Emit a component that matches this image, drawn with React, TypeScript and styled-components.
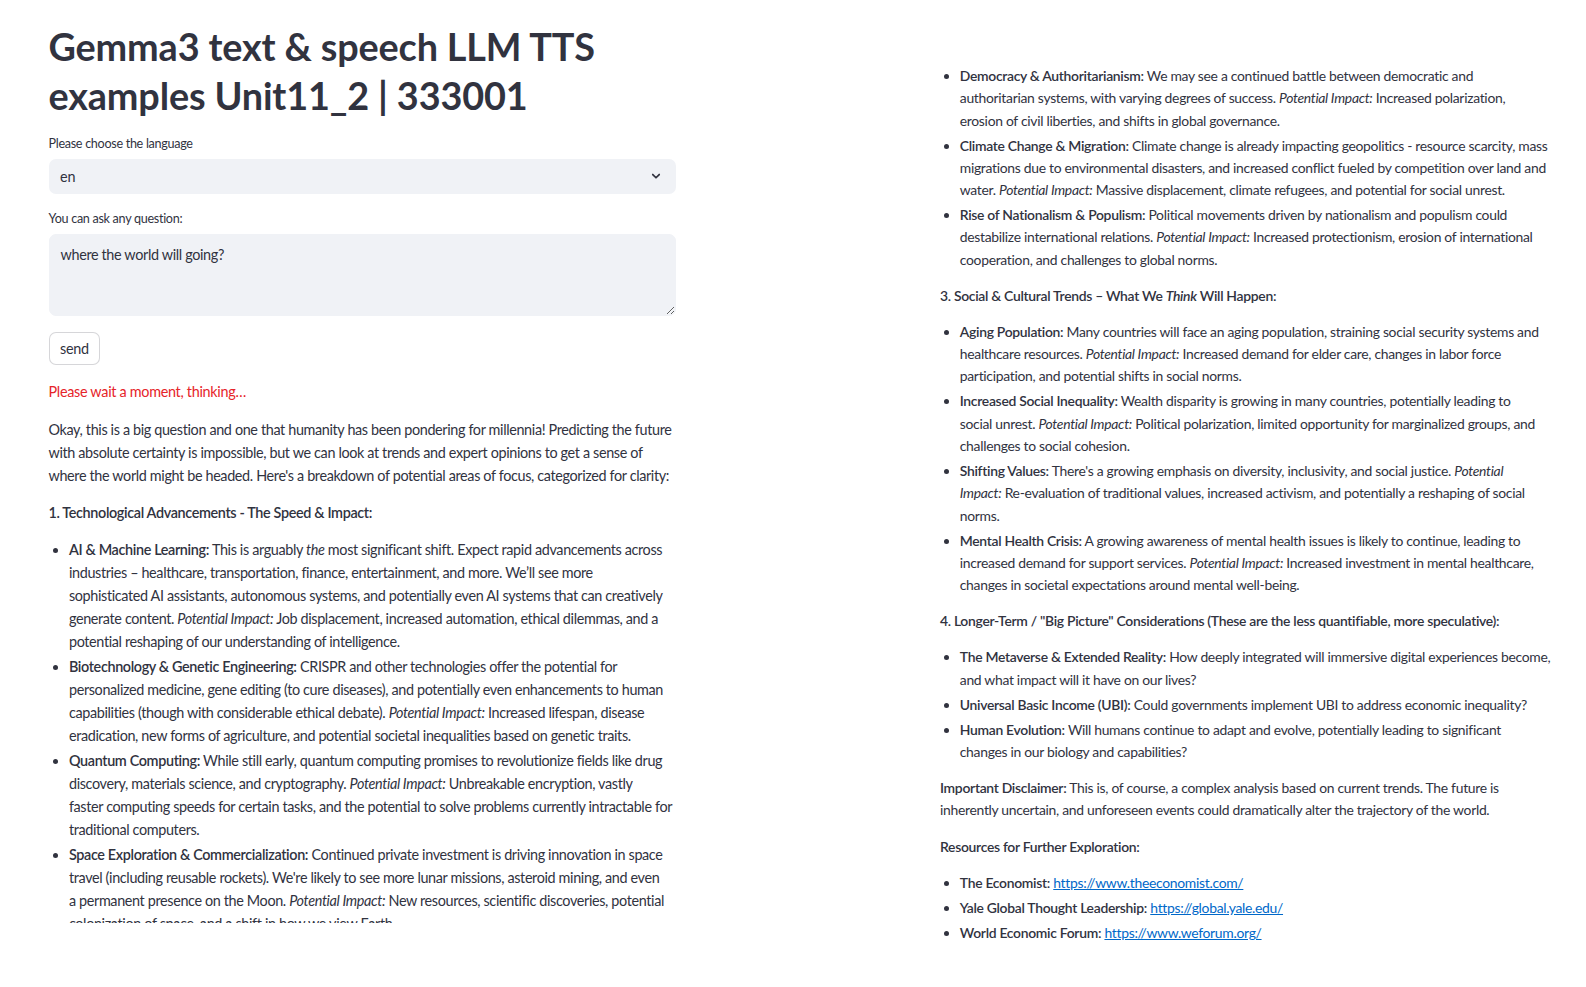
import React from "react";
import styled, { createGlobalStyle } from "styled-components";

const Global = createGlobalStyle`
  html, body { margin: 0; padding: 0; background: #ffffff; }
  body {
    font-family: Lato, "Noto Sans", sans-serif;
    color: #31333f;
    -webkit-font-smoothing: antialiased;
  }
  #root { width: 1586px; height: 987px; overflow: hidden; }
`;

const Page = styled.div`
  display: flex;
  align-items: flex-start;
  width: 1586px;
  height: 987px;
`;

const LeftPane = styled.main`
  box-sizing: border-box;
  flex: 0 0 940px;
  height: 923px;
  padding-left: 48.5px;
  overflow: hidden;
`;

const Column = styled.div`
  width: 627px;
  display: flex;
  flex-direction: column;
`;

const Title = styled.h1`
  margin: 0;
  padding-top: 23px;
  font-size: 37.8px;
  line-height: 48.5px;
  font-weight: 700;
  color: #31333f;
  letter-spacing: -0.15px;
`;

const Field = styled.div<{ $top: number }>`
  display: flex;
  flex-direction: column;
  gap: 6px;
  margin-top: ${(p) => p.$top}px;
`;

const FieldLabel = styled.label`
  font-size: 12.6px;
  line-height: 18px;
  color: #31333f;
  letter-spacing: -0.3px;
`;

const SelectBox = styled.div`
  box-sizing: border-box;
  height: 34.5px;
  display: flex;
  align-items: center;
  justify-content: space-between;
  padding: 0 13px 0 11.5px;
  background: #f0f2f6;
  border-radius: 7px;
  font-size: 14.4px;
  color: #31333f;
`;

const Chevron = styled.svg`
  width: 14px;
  height: 14px;
  color: #31333f;
`;

const TextArea = styled.textarea`
  box-sizing: border-box;
  display: block;
  width: 100%;
  height: 82px;
  margin: 0;
  padding: 8px 11px;
  border: 1px solid #f0f2f6;
  border-radius: 7px;
  background: #f0f2f6;
  font-family: Lato, "Noto Sans", sans-serif;
  font-size: 14.4px;
  line-height: 23px;
  letter-spacing: -0.35px;
  color: #31333f;
  resize: vertical;
  outline: none;
`;

const SendButton = styled.button`
  align-self: flex-start;
  box-sizing: border-box;
  height: 33px;
  margin-top: 16.5px;
  padding: 0 10.5px;
  background: #ffffff;
  border: 1px solid rgba(49, 51, 63, 0.2);
  border-radius: 7px;
  font-family: Lato, "Noto Sans", sans-serif;
  font-size: 14.4px;
  color: #31333f;
  letter-spacing: -0.3px;
`;

const Markdown = styled.div<{ $size: number; $lh: number; $top: number; $ls: number; $gap: number }>`
  margin-top: ${(p) => p.$top}px;
  font-size: ${(p) => p.$size}px;
  line-height: ${(p) => p.$lh}px;
  letter-spacing: ${(p) => p.$ls}px;
  white-space: nowrap;
  color: #31333f;
  --item-gap: ${(p) => p.$gap}px;
`;

const Status = styled.p`
  margin: 15px 0 0;
  color: #e6242a;
`;

const Para = styled.p`
  margin: 0 0 1em;
`;

const List = styled.ul`
  margin: 0 0 1em;
  padding-left: 1.42em;
  list-style: disc;
`;

const Item = styled.li`
  margin: var(--item-gap) 0 0;
  &:first-child { margin-top: 0; }
`;

const B = styled.strong`
  font-weight: 600;
`;

const I = styled.em`
  font-style: italic;
`;

const Link = styled.a`
  color: #0068c9;
  text-decoration: underline;
`;

const RightPane = styled.aside`
  box-sizing: border-box;
  flex: 0 0 620px;
  padding-top: 65px;
`;

const PI = () => <I>Potential Impact:</I>;

export default function App() {
  return (
    <>
      <Global />
      <Page>
        <LeftPane>
          <Column>
            <Title>
              Gemma3 text &amp; speech LLM TTS
              <br />
              examples Unit11_2 | 333001
            </Title>
            <Field $top={15}>
              <FieldLabel>Please choose the language</FieldLabel>
              <SelectBox>
                <span>en</span>
                <Chevron viewBox="0 0 24 24" fill="none" stroke="currentColor" strokeWidth="3" strokeLinecap="round" strokeLinejoin="round">
                  <path d="M6.5 9.5l5.5 5.5 5.5-5.5" />
                </Chevron>
              </SelectBox>
            </Field>
            <Field $top={16}>
              <FieldLabel>You can ask any question:</FieldLabel>
              <TextArea defaultValue="where the world will going?" />
            </Field>
            <SendButton>send</SendButton>
            <Markdown $size={14.4} $lh={23} $top={0} $ls={-0.3} $gap={2}>
              <Status>Please wait a moment, thinking…</Status>
            </Markdown>
            <Markdown $size={14.4} $lh={23} $top={14.5} $ls={-0.36} $gap={1.9}>
              <Para>
                Okay, this is a big question and one that humanity has been pondering for millennia! Predicting the future
                <br />
                with absolute certainty is impossible, but we can look at trends and expert opinions to get a sense of
                <br />
                where the world might be headed. Here's a breakdown of potential areas of focus, categorized for clarity:
              </Para>
              <Para>
                <B>1. Technological Advancements - The Speed &amp; Impact:</B>
              </Para>
              <List>
                <Item>
                  <B>AI &amp; Machine Learning:</B> This is arguably <I>the</I> most significant shift. Expect rapid advancements across
                  <br />
                  industries – healthcare, transportation, finance, entertainment, and more. We’ll see more
                  <br />
                  sophisticated AI assistants, autonomous systems, and potentially even AI systems that can creatively
                  <br />
                  generate content. <PI /> Job displacement, increased automation, ethical dilemmas, and a
                  <br />
                  potential reshaping of our understanding of intelligence.
                </Item>
                <Item>
                  <B>Biotechnology &amp; Genetic Engineering:</B> CRISPR and other technologies offer the potential for
                  <br />
                  personalized medicine, gene editing (to cure diseases), and potentially even enhancements to human
                  <br />
                  capabilities (though with considerable ethical debate). <PI /> Increased lifespan, disease
                  <br />
                  eradication, new forms of agriculture, and potential societal inequalities based on genetic traits.
                </Item>
                <Item>
                  <B>Quantum Computing:</B> While still early, quantum computing promises to revolutionize fields like drug
                  <br />
                  discovery, materials science, and cryptography. <PI /> Unbreakable encryption, vastly
                  <br />
                  faster computing speeds for certain tasks, and the potential to solve problems currently intractable for
                  <br />
                  traditional computers.
                </Item>
                <Item>
                  <B>Space Exploration &amp; Commercialization:</B> Continued private investment is driving innovation in space
                  <br />
                  travel (including reusable rockets). We're likely to see more lunar missions, asteroid mining, and even
                  <br />
                  a permanent presence on the Moon. <PI /> New resources, scientific discoveries, potential
                  <br />
                  colonization of space, and a shift in how we view Earth.
                </Item>
              </List>
            </Markdown>
          </Column>
        </LeftPane>
        <RightPane>
          <Markdown $size={13.92} $lh={22.25} $top={0} $ls={-0.3} $gap={2.8}>
            <List>
              <Item>
                <B>Democracy &amp; Authoritarianism:</B> We may see a continued battle between democratic and
                <br />
                authoritarian systems, with varying degrees of success. <PI /> Increased polarization,
                <br />
                erosion of civil liberties, and shifts in global governance.
              </Item>
              <Item>
                <B>Climate Change &amp; Migration:</B> Climate change is already impacting geopolitics - resource scarcity, mass
                <br />
                migrations due to environmental disasters, and increased conflict fueled by competition over land and
                <br />
                water. <PI /> Massive displacement, climate refugees, and potential for social unrest.
              </Item>
              <Item>
                <B>Rise of Nationalism &amp; Populism:</B> Political movements driven by nationalism and populism could
                <br />
                destabilize international relations. <PI /> Increased protectionism, erosion of international
                <br />
                cooperation, and challenges to global norms.
              </Item>
            </List>
            <Para>
              <B>
                3. Social &amp; Cultural Trends – What We <I>Think</I> Will Happen:
              </B>
            </Para>
            <List>
              <Item>
                <B>Aging Population:</B> Many countries will face an aging population, straining social security systems and
                <br />
                healthcare resources. <PI /> Increased demand for elder care, changes in labor force
                <br />
                participation, and potential shifts in social norms.
              </Item>
              <Item>
                <B>Increased Social Inequality:</B> Wealth disparity is growing in many countries, potentially leading to
                <br />
                social unrest. <PI /> Political polarization, limited opportunity for marginalized groups, and
                <br />
                challenges to social cohesion.
              </Item>
              <Item>
                <B>Shifting Values:</B> There's a growing emphasis on diversity, inclusivity, and social justice. <I>Potential</I>
                <br />
                <I>Impact:</I> Re-evaluation of traditional values, increased activism, and potentially a reshaping of social
                <br />
                norms.
              </Item>
              <Item>
                <B>Mental Health Crisis:</B> A growing awareness of mental health issues is likely to continue, leading to
                <br />
                increased demand for support services. <PI /> Increased investment in mental healthcare,
                <br />
                changes in societal expectations around mental well-being.
              </Item>
            </List>
            <Para>
              <B>4. Longer-Term / "Big Picture" Considerations (These are the less quantifiable, more speculative):</B>
            </Para>
            <List>
              <Item>
                <B>The Metaverse &amp; Extended Reality:</B> How deeply integrated will immersive digital experiences become,
                <br />
                and what impact will it have on our lives?
              </Item>
              <Item>
                <B>Universal Basic Income (UBI):</B> Could governments implement UBI to address economic inequality?
              </Item>
              <Item>
                <B>Human Evolution:</B> Will humans continue to adapt and evolve, potentially leading to significant
                <br />
                changes in our biology and capabilities?
              </Item>
            </List>
            <Para>
              <B>Important Disclaimer:</B> This is, of course, a complex analysis based on current trends. The future is
              <br />
              inherently uncertain, and unforeseen events could dramatically alter the trajectory of the world.
            </Para>
            <Para>
              <B>Resources for Further Exploration:</B>
            </Para>
            <List>
              <Item>
                <B>The Economist:</B> <Link href="#">https://www.theeconomist.com/</Link>
              </Item>
              <Item>
                <B>Yale Global Thought Leadership:</B> <Link href="#">https://global.yale.edu/</Link>
              </Item>
              <Item>
                <B>World Economic Forum:</B> <Link href="#">https://www.weforum.org/</Link>
              </Item>
            </List>
          </Markdown>
        </RightPane>
      </Page>
    </>
  );
}
